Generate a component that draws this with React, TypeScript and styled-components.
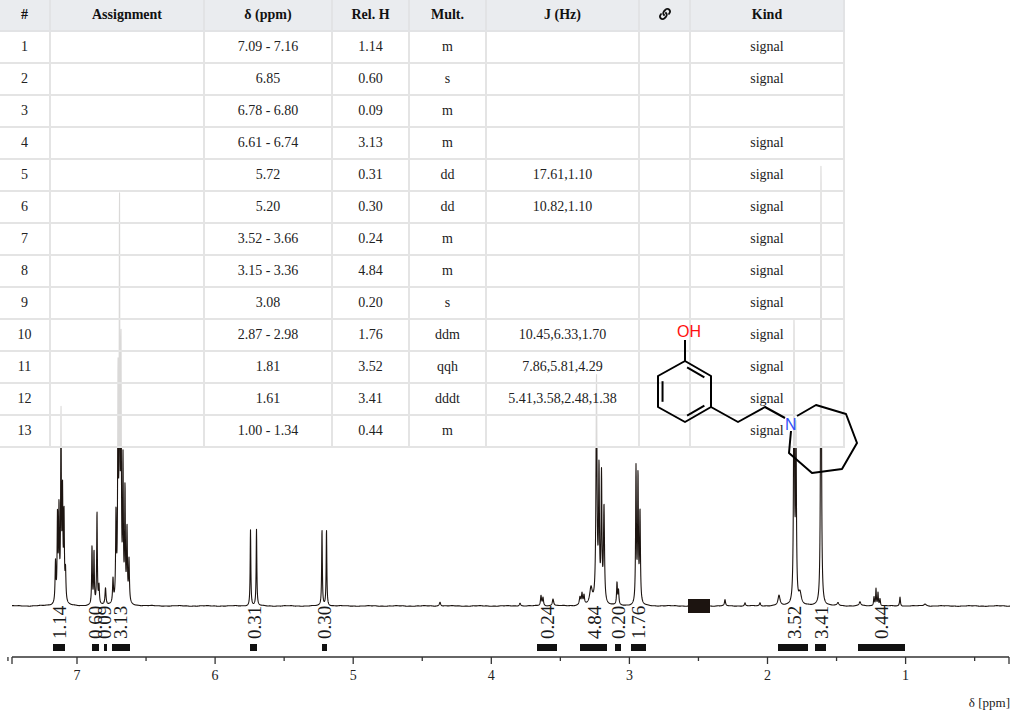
import React from 'react';
import styled, { createGlobalStyle } from 'styled-components';
import { FaLink } from 'react-icons/fa';

const GlobalStyle = createGlobalStyle`
  html, body {
    margin: 0;
    padding: 0;
    background: #fff;
  }
  body {
    font-family: "Liberation Serif", "Times New Roman", serif;
  }
`;

const Page = styled.div`
  position: relative;
  width: 1024px;
  height: 722px;
  overflow: hidden;
  background: #fff;
`;

const Canvas = styled.svg`
  position: absolute;
  left: 0;
  top: 0;
  width: 1024px;
  height: 722px;
`;

const PeakTable = styled.table`
  position: relative;
  z-index: 1;
  width: 845px;
  table-layout: fixed;
  border-collapse: collapse;
  background: rgba(255, 255, 255, 0.84);
  font-family: "Liberation Serif", "Times New Roman", serif;
  font-size: 14px;
  color: #222;
`;

const Th = styled.th<{ $w: number }>`
  width: ${p => p.$w - 2}px;
  height: 30px;
  padding: 0;
  background: rgba(233, 235, 238, 0.95);
  border: 2px solid #e2e3e5;
  border-top: none;
  font-weight: bold;
  color: #111;
  text-align: center;
  &:first-child {
    border-left: none;
  }
`;

const Td = styled.td`
  height: 30px;
  padding: 0;
  border: 2px solid #e4e4e4;
  text-align: center;
  white-space: nowrap;
  &:first-child {
    border-left: none;
  }
`;

const LinkIcon = styled(FaLink)`
  font-size: 12px;
  vertical-align: -1px;
  color: #111;
`;

const Molecule = styled.svg`
  position: absolute;
  left: 640px;
  top: 310px;
  width: 230px;
  height: 175px;
  z-index: 2;
  overflow: visible;
`;

type Row = {
  shift: string;
  rel: string;
  mult: string;
  j?: string;
  kind?: string;
};

const rows: Row[] = [
  { shift: '7.09 - 7.16', rel: '1.14', mult: 'm', kind: 'signal' },
  { shift: '6.85', rel: '0.60', mult: 's', kind: 'signal' },
  { shift: '6.78 - 6.80', rel: '0.09', mult: 'm' },
  { shift: '6.61 - 6.74', rel: '3.13', mult: 'm', kind: 'signal' },
  { shift: '5.72', rel: '0.31', mult: 'dd', j: '17.61,1.10', kind: 'signal' },
  { shift: '5.20', rel: '0.30', mult: 'dd', j: '10.82,1.10', kind: 'signal' },
  { shift: '3.52 - 3.66', rel: '0.24', mult: 'm', kind: 'signal' },
  { shift: '3.15 - 3.36', rel: '4.84', mult: 'm', kind: 'signal' },
  { shift: '3.08', rel: '0.20', mult: 's', kind: 'signal' },
  { shift: '2.87 - 2.98', rel: '1.76', mult: 'ddm', j: '10.45,6.33,1.70', kind: 'signal' },
  { shift: '1.81', rel: '3.52', mult: 'qqh', j: '7.86,5.81,4.29', kind: 'signal' },
  { shift: '1.61', rel: '3.41', mult: 'dddt', j: '5.41,3.58,2.48,1.38', kind: 'signal' },
  { shift: '1.00 - 1.34', rel: '0.44', mult: 'm', kind: 'signal' },
];

// chart geometry
const BASE = 606;
const AXIS_Y = 657;
const ppmX = (ppm: number) => 77 + (7 - ppm) * 138.1;

// lines as [x px, height px, half width px]
const LINES: [number, number, number][] = [
  [55.5, 40, 0.5], [57.5, 85, 0.45], [59, 90, 0.45], [61, 185, 0.4], [62.5, 105, 0.45], [64, 85, 0.45], [65.5, 30, 0.5],
  [92, 58, 0.4], [94, 52, 0.4], [97, 92, 0.4], [99, 18, 0.5],
  [105.5, 17, 0.6],
  [113, 24, 0.5], [116, 85, 0.45], [118, 220, 0.4], [119.5, 385, 0.35], [121, 250, 0.4], [123, 135, 0.4], [125, 110, 0.4], [127, 72, 0.45], [129, 42, 0.5],
  [250.5, 76, 0.4], [256.5, 76, 0.4],
  [322, 76, 0.4], [326.5, 76, 0.4],
  [440, 4, 0.8], [520, 3, 0.8],
  [541, 10, 0.6], [543, 8, 0.6], [553, 7, 0.8],
  [580, 8, 0.8], [582, 11, 0.6], [584, 9, 0.6],
  [591, 16, 1.5],
  [596.5, 225, 0.6], [599, 128, 0.5], [601.5, 125, 0.5], [604, 95, 0.6],
  [617, 22, 0.5], [618.5, 14, 0.5],
  [636, 135, 0.45], [638, 125, 0.45], [640, 90, 0.5],
  [725, 6, 0.6], [745, 3, 0.6], [760, 3, 0.6],
  [779, 10, 1.2],
  [794, 280, 0.5], [796, 170, 0.5], [800, 11, 1.5],
  [821, 445, 0.45],
  [838, 3, 1], [860, 4, 1],
  [874, 9, 0.5], [876, 17, 0.4], [878, 13, 0.4], [880, 7, 0.5],
  [900, 9, 0.5], [925, 2, 1.5],
];

const buildSpectrum = () => {
  const pts: string[] = [];
  for (let x = 12; x <= 1010; x += 0.15) {
    let s = 0;
    for (const [x0, h, w] of LINES) {
      const d = (x - x0) / w;
      s += h / (1 + d * d);
    }
    const noise = Math.sin(x * 0.9) * 0.12 + Math.sin(x * 0.23 + 1.3) * 0.25;
    pts.push(`${x.toFixed(2)},${(BASE - s + noise).toFixed(2)}`);
  }
  return 'M' + pts.join('L');
};

const spectrumPath = buildSpectrum();

// integrals: label, label centre x, bar from / to
const INTEGRALS: [string, number, number, number][] = [
  ['1.14', 59, 53, 65],
  ['0.60', 95, 92, 99],
  ['0.09', 104, 104, 107],
  ['3.13', 120, 112, 130],
  ['0.31', 254, 250, 257],
  ['0.30', 324, 322, 327],
  ['0.24', 547, 537, 557],
  ['4.84', 594, 580, 607],
  ['0.20', 618, 615, 621],
  ['1.76', 638, 631, 646],
  ['3.52', 794, 778, 808],
  ['3.41', 821, 815, 826],
  ['0.44', 881, 858, 905],
];

const Spectrum: React.FC = () => {
  const ticks: React.ReactNode[] = [];
  for (let i = 0; i <= 14; i++) {
    const ppm = 7.5 - i * 0.5;
    const x = ppmX(ppm);
    const major = Number.isInteger(ppm);
    ticks.push(
      <line key={`t${i}`} x1={x} y1={AXIS_Y} x2={x} y2={AXIS_Y + (major ? 7 : 4)} stroke="#333" strokeWidth={1.3} />
    );
    if (major) {
      ticks.push(
        <text key={`l${i}`} x={x} y={680} fontSize={14} textAnchor="middle" fill="#222" fontFamily="Liberation Serif, serif">
          {ppm}
        </text>
      );
    }
  }

  return (
    <Canvas viewBox="0 0 1024 722">
      <path d={spectrumPath} fill="none" stroke="#1c1410" strokeWidth={1.1} strokeLinejoin="round" />
      <rect x={688} y={599} width={22} height={14} fill="#1c1410" />
      {INTEGRALS.map(([label, cx, a, b]) => (
        <g key={label + cx}>
          <text
            transform={`translate(${cx + 6.5}, 639) rotate(-90)`}
            fontSize={19}
            fill="#1a1a1a"
            fontFamily="Liberation Serif, serif"
          >
            {label}
          </text>
          <rect x={a} y={644} width={b - a} height={7} fill="#111" />
        </g>
      ))}
      <line x1={12} y1={AXIS_Y} x2={1009} y2={AXIS_Y} stroke="#333" strokeWidth={1.4} />
      <line x1={12} y1={AXIS_Y} x2={12} y2={AXIS_Y + 7} stroke="#333" strokeWidth={1.3} />
      <line x1={1009} y1={AXIS_Y} x2={1009} y2={AXIS_Y + 7} stroke="#333" strokeWidth={1.3} />
      {ticks}
      <text x={1010} y={707} fontSize={13} textAnchor="end" fill="#222" fontFamily="Liberation Serif, serif">
        δ [ppm]
      </text>
    </Canvas>
  );
};

// inner line of a double bond, pulled toward the ring centre
const innerBond = (
  a: [number, number],
  b: [number, number],
  c: [number, number]
) => {
  const t = 0.17;
  const a1 = [a[0] + (c[0] - a[0]) * t, a[1] + (c[1] - a[1]) * t];
  const b1 = [b[0] + (c[0] - b[0]) * t, b[1] + (c[1] - b[1]) * t];
  const k = 0.1;
  return {
    x1: a1[0] + (b1[0] - a1[0]) * k,
    y1: a1[1] + (b1[1] - a1[1]) * k,
    x2: b1[0] - (b1[0] - a1[0]) * k,
    y2: b1[1] - (b1[1] - a1[1]) * k,
  };
};

const Structure: React.FC = () => {
  const A: [number, number] = [685, 361];
  const B: [number, number] = [711, 376];
  const C: [number, number] = [711, 407];
  const D: [number, number] = [685, 422];
  const E: [number, number] = [658, 407];
  const F: [number, number] = [658, 376];
  const centre: [number, number] = [684.7, 391.5];
  const ring = [A, B, C, D, E, F].map(p => p.join(',')).join(' ');
  const azepane = '797,416 816,405 846,414 857,443 842,469 812,473 789,453 791,431';

  return (
    <Molecule viewBox="640 310 230 175">
      <g stroke="#000" strokeWidth={2} fill="none" strokeLinejoin="round">
        <polygon points={ring} />
        <line {...innerBond(A, B, centre)} />
        <line {...innerBond(E, F, centre)} />
        <line {...innerBond(C, D, centre)} />
        <line x1={685} y1={361} x2={685} y2={340} />
        <polyline points="711,407 738,422 765,407 785,418" />
        <polyline points={azepane} />
      </g>
      <text x={677} y={337} fontSize={16} fill="#ff1010" fontFamily="Liberation Sans, Arial, sans-serif">
        OH
      </text>
      <text x={785} y={430} fontSize={16} fill="#3050f8" fontFamily="Liberation Sans, Arial, sans-serif">
        N
      </text>
    </Molecule>
  );
};

const App: React.FC = () => {
  return (
    <Page>
      <GlobalStyle />
      <Spectrum />
      <PeakTable>
        <thead>
          <tr>
            <Th $w={51}>#</Th>
            <Th $w={154}>Assignment</Th>
            <Th $w={128}>δ (ppm)</Th>
            <Th $w={77}>Rel. H</Th>
            <Th $w={77}>Mult.</Th>
            <Th $w={153}>J (Hz)</Th>
            <Th $w={51}>
              <LinkIcon />
            </Th>
            <Th $w={154}>Kind</Th>
          </tr>
        </thead>
        <tbody>
          {rows.map((r, i) => (
            <tr key={i}>
              <Td>{i + 1}</Td>
              <Td />
              <Td>{r.shift}</Td>
              <Td>{r.rel}</Td>
              <Td>{r.mult}</Td>
              <Td>{r.j ?? ''}</Td>
              <Td />
              <Td>{r.kind ?? ''}</Td>
            </tr>
          ))}
        </tbody>
      </PeakTable>
      <Structure />
    </Page>
  );
};

export default App;
